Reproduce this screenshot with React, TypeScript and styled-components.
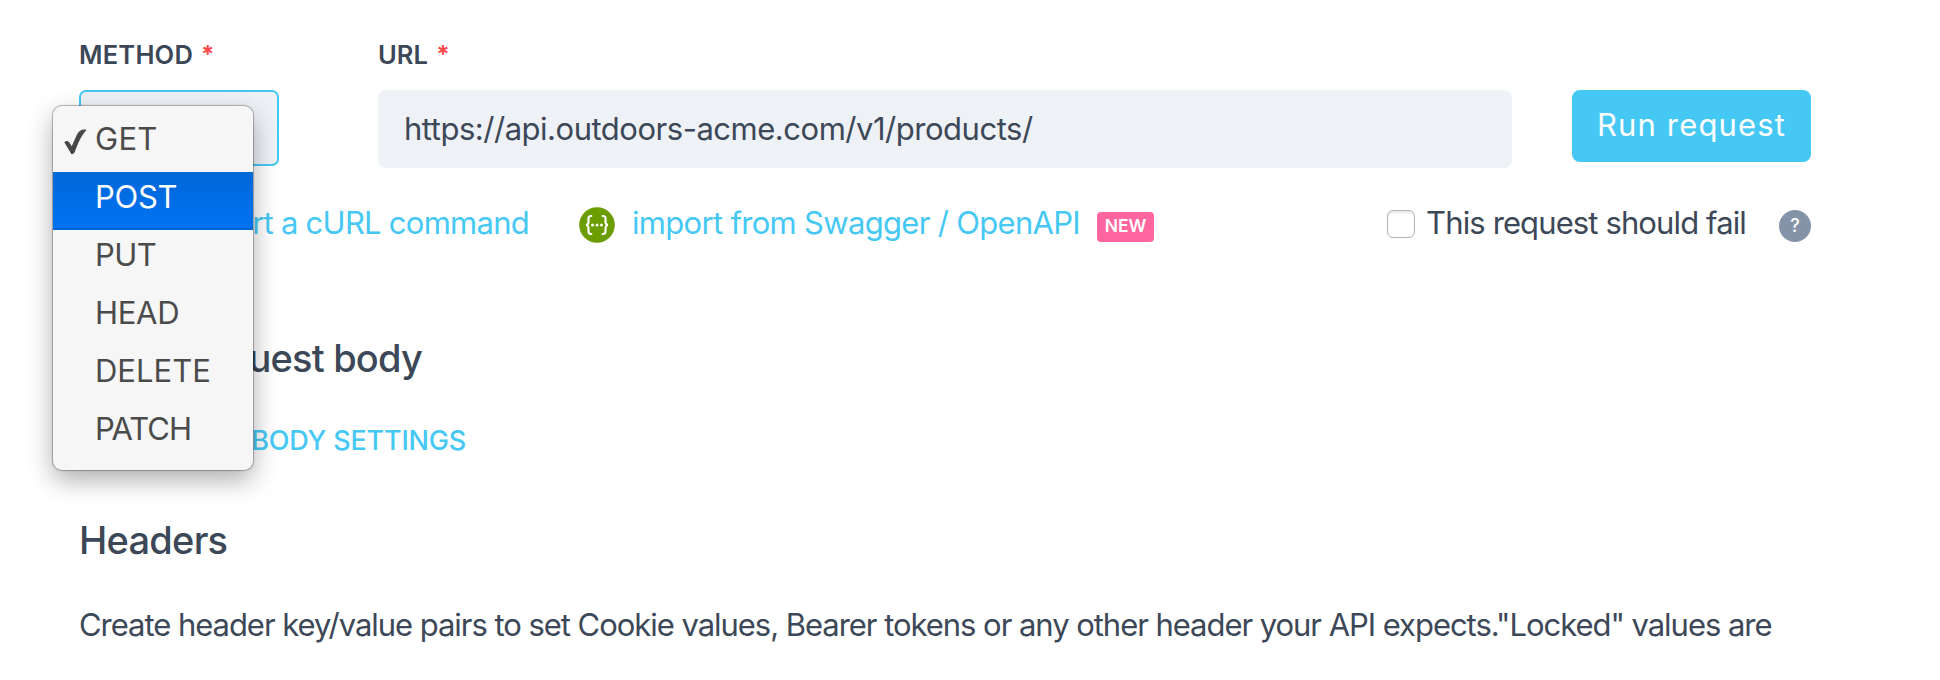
import React from "react";
import styled, { createGlobalStyle } from "styled-components";

const ink = "#3c4858";
const sky = "#46c8f4";

const GlobalStyle = createGlobalStyle`
  * { box-sizing: border-box; }
  body { margin: 0; background: #fff; }
`;

const Page = styled.main`
  position: relative;
  width: 1940px;
  height: 680px;
  overflow: hidden;
  padding: 40px 129px 0 79px;
  background: #fff;
  color: ${ink};
  font: 400 31px/38px Inter, "Liberation Sans", sans-serif;
  white-space: nowrap;
`;

const RequestRow = styled.div`
  display: flex;
  align-items: flex-start;
  height: 128px;
`;

const Field = styled.div<{ $width: number; $after: number }>`
  display: flex;
  flex-direction: column;
  gap: 20px;
  width: ${(p) => p.$width}px;
  margin-right: ${(p) => p.$after}px;
`;

const Label = styled.label<{ $spacing: number }>`
  display: flex;
  gap: 8px;
  height: 30px;
  font-size: 25.5px;
  font-weight: 600;
  line-height: 30px;
  letter-spacing: ${(p) => p.$spacing}px;
`;

const Required = styled.span`
  color: #ff4a4a;
  font-size: 24px;
  font-weight: 700;
`;

const MethodSelect = styled.div`
  height: 76px;
  border: 2px solid ${sky};
  border-radius: 7px;
  background: #eef1f6;
`;

const UrlInput = styled.div`
  height: 78px;
  padding: 20px 26px;
  border-radius: 8px;
  background: #eef1f6;
  letter-spacing: -0.48px;
`;

const RunButton = styled.button`
  width: 239px;
  height: 72px;
  margin-top: 50px;
  padding: 0 0 2px;
  border: 0;
  border-radius: 8px;
  background: ${sky};
  color: #fff;
  font: inherit;
  letter-spacing: 1.15px;
`;

const OptionsRow = styled.div`
  display: flex;
  height: 38px;
  margin-top: 36px;
`;

const ImportLink = styled.a<{ $width: number; $spacing: number; $end?: boolean }>`
  width: ${(p) => p.$width}px;
  color: ${sky};
  letter-spacing: ${(p) => p.$spacing}px;
  text-align: ${(p) => (p.$end ? "right" : "left")};
`;

const SwaggerIcon = styled.svg`
  width: 36px;
  height: 36px;
  margin: 3px 17px 0 50px;
`;

const NewBadge = styled.span`
  width: 57px;
  height: 30px;
  margin-top: 8px;
  border-radius: 4px;
  background: #ff659e;
  color: #fff;
  font-size: 17.5px;
  font-weight: 600;
  line-height: 28px;
  text-align: center;
`;

const FailOption = styled.label`
  display: flex;
  margin-left: auto;
  letter-spacing: -0.88px;
`;

const Checkbox = styled.span`
  width: 28px;
  height: 28px;
  margin: 6px 11px 0 0;
  border: 1.5px solid #b4b4b4;
  border-radius: 6px;
  background: #fff;
  box-shadow: inset 0 2px 2px #e8e8e8;
`;

const HelpDot = styled.span`
  width: 32px;
  height: 32px;
  margin: 6px 0 0 33px;
  border-radius: 50%;
  background: #8593a9;
  color: #fff;
  font-size: 18px;
  font-weight: 500;
  line-height: 32px;
  text-align: center;
`;

const Heading = styled.h2<{ $top: number; $spacing: number; $width?: number }>`
  width: ${(p) => (p.$width ? `${p.$width}px` : "auto")};
  margin: ${(p) => p.$top}px 0 0;
  font-size: 38px;
  font-weight: 500;
  line-height: 46px;
  letter-spacing: ${(p) => p.$spacing}px;
  text-align: ${(p) => (p.$width ? "right" : "left")};
`;

const SettingsLink = styled.a`
  display: block;
  width: 387px;
  margin-top: 44px;
  color: ${sky};
  font-size: 27px;
  font-weight: 500;
  line-height: 32px;
  letter-spacing: -0.2px;
  text-align: right;
`;

const Description = styled.p`
  margin: 39px 0 0;
  line-height: 46px;
  letter-spacing: -1.04px;
`;

const Menu = styled.ul`
  position: absolute;
  top: 106px;
  left: 53px;
  width: 200px;
  height: 364px;
  margin: 0;
  padding: 8px 0 0;
  border-radius: 9px;
  background: #f6f6f6;
  box-shadow: 0 0 1px 1px rgba(0, 0, 0, 0.28), 0 10px 26px rgba(0, 0, 0, 0.32);
  list-style: none;
`;

const MenuItem = styled.li<{ $spacing: number; $active?: boolean }>`
  display: flex;
  align-items: center;
  height: 58px;
  padding: 0 0 8px 11px;
  background: ${(p) => (p.$active ? "linear-gradient(#0067d8, #0073f2 96%, #0064d6 97%)" : "none")};
  color: ${(p) => (p.$active ? "#fff" : "#4b4b4b")};
  letter-spacing: ${(p) => p.$spacing}px;
`;

const CheckSlot = styled.span`
  display: flex;
  width: 31px;
  padding-top: 5px;
`;

const methods = [
  { name: "GET", spacing: 0.3, checked: true },
  { name: "POST", spacing: -0.3, active: true },
  { name: "PUT", spacing: -0.6 },
  { name: "HEAD", spacing: -0.3 },
  { name: "DELETE", spacing: 0 },
  { name: "PATCH", spacing: -1 },
];

export default function App() {
  return (
    <Page>
      <GlobalStyle />
      <RequestRow>
        <Field $width={200} $after={99}>
          <Label $spacing={0.2}>METHOD <Required>*</Required></Label>
          <MethodSelect />
        </Field>
        <Field $width={1134} $after={60}>
          <Label $spacing={0.1}>URL <Required>*</Required></Label>
          <UrlInput>https://api.outdoors-acme.com/v1/products/</UrlInput>
        </Field>
        <RunButton>Run request</RunButton>
      </RequestRow>

      <OptionsRow>
        <ImportLink $width={450} $spacing={-0.74} $end>rt a cURL command</ImportLink>
        <SwaggerIcon viewBox="0 0 36 36" fill="none">
          <circle cx="18" cy="18" r="17.8" fill="#6b9d00" />
          <path
            d="M13.2 9H12c-1.8 0-2.5.9-2.5 2.5v3c0 2-.7 3.2-2.4 3.5 1.7.3 2.4 1.5 2.4 3.5v3c0 1.6.7 2.5 2.5 2.5h1.2M22.8 9H24c1.8 0 2.5.9 2.5 2.5v3c0 2 .7 3.2 2.4 3.5-1.7.3-2.4 1.5-2.4 3.5v3c0 1.6-.7 2.5-2.5 2.5h-1.2"
            stroke="#fff"
            strokeWidth="2.2"
          />
          <g fill="#fff">
            <circle cx="13.5" cy="18" r="1.5" />
            <circle cx="18" cy="18" r="1.5" />
            <circle cx="22.5" cy="18" r="1.5" />
          </g>
        </SwaggerIcon>
        <ImportLink $width={465} $spacing={-0.69}>import from Swagger / OpenAPI</ImportLink>
        <NewBadge>NEW</NewBadge>
        <FailOption><Checkbox />This request should fail</FailOption>
        <HelpDot>?</HelpDot>
      </OptionsRow>

      <Heading $top={93} $spacing={-0.8} $width={343}>uest body</Heading>
      <SettingsLink>BODY SETTINGS</SettingsLink>
      <Heading $top={60} $spacing={-0.75}>Headers</Heading>
      <Description>
        Create header key/value pairs to set Cookie values, Bearer tokens or any other header your API expects."Locked" values are
      </Description>

      <Menu>
        {methods.map((m) => (
          <MenuItem key={m.name} $spacing={m.spacing} $active={m.active}>
            <CheckSlot>
              {m.checked && (
                <svg width="23" height="26" viewBox="0 0 23 26">
                  <path
                    d="M.8 13.2C2 12.2 4.300 12.2 5.2 14L7.8 18.2 13.500 5.500C15.200 2 18 .5 22 1 17.500 5.500 12.800 15 10.200 23.500L7.800 25Z"
                    fill="#464646"
                    stroke="#464646"
                    strokeWidth="1"
                    strokeLinejoin="round"
                  />
                </svg>
              )}
            </CheckSlot>
            {m.name}
          </MenuItem>
        ))}
      </Menu>
    </Page>
  );
}
